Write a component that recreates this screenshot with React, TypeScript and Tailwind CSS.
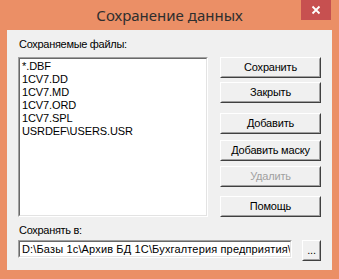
import React from "react";

const FILES = ["*.DBF", "1CV7.DD", "1CV7.MD", "1CV7.ORD", "1CV7.SPL", "USRDEF\\USERS.USR"];

const ui = { fontFamily: '"Liberation Sans", Arial, sans-serif' };

function Btn({ label, disabled, className = "" }: { label: string; disabled?: boolean; className?: string }) {
  return (
    <div className={`border border-t-white border-l-white border-b-[#404040] border-r-[#404040] ${className}`}>
      <div
        className={`flex h-[19px] items-center justify-center border border-t-[#f0f0f0] border-l-[#f0f0f0] border-b-[#a0a0a0] border-r-[#a0a0a0] bg-[#f0f0f0] text-[11px] tracking-[-0.2px] ${
          disabled ? "text-[#a0a0a0]" : "text-black"
        }`}
      >
        {label}
      </div>
    </div>
  );
}

function Sunken({ children, className = "" }: { children: React.ReactNode; className?: string }) {
  return (
    <div className={`border border-t-[#a0a0a0] border-l-[#a0a0a0] border-b-white border-r-white ${className}`}>
      <div className="h-full w-full overflow-hidden border border-t-[#696969] border-l-[#696969] border-b-[#e3e3e3] border-r-[#e3e3e3] bg-white">
        {children}
      </div>
    </div>
  );
}

export default function App() {
  return (
    <div className="flex h-[279px] w-[339px] flex-col bg-[#eb8f66]" style={ui}>
      {/* title bar */}
      <div className="relative flex h-[30px] shrink-0 items-center justify-center">
        <span className="text-[15px] text-[#2e2e2e]" style={{ fontFamily: '"Noto Sans", "Open Sans", sans-serif' }}>
          Сохранение данных
        </span>
        <div className="absolute right-[8px] top-0 flex h-[20px] w-[30px] items-center justify-center bg-[#c75050]">
          <svg width="10" height="10" viewBox="0 0 10 10">
            <path d="M1.5 1.5 L8.5 8.5 M8.5 1.5 L1.5 8.5" stroke="white" strokeWidth="1.8" />
          </svg>
        </div>
      </div>

      {/* client area */}
      <div className="mx-[7px] mb-[9px] flex flex-1 flex-col bg-[#f0f0f0] pl-[11px] pr-[10px] pt-[7px]">
        <div className="h-[14px] pl-[1px] text-[11px] leading-[14px] tracking-[-0.3px] text-black">Сохраняемые файлы:</div>
        <div className="mt-[6px] flex gap-[12px]">
          <Sunken className="h-[160px] w-[190px]">
            <div className="pl-[2px] pt-[1px] text-[11px] leading-[13px] tracking-[-0.1px] text-black">
              {FILES.map((f) => (
                <div key={f}>{f}</div>
              ))}
            </div>
          </Sunken>
          <div className="flex w-[101px] flex-col">
            <Btn label="Сохранить" />
            <Btn label="Закрыть" className="mt-[4px]" />
            <Btn label="Добавить" className="mt-[10px]" />
            <Btn label="Добавить маску" className="mt-[6px]" />
            <Btn label="Удалить" disabled className="mt-[5px]" />
            <Btn label="Помощь" className="mt-[9px]" />
          </div>
        </div>
        <div className="mt-[6px] h-[14px] pl-[1px] text-[11px] leading-[14px] tracking-[-0.3px] text-black">Сохранять в:</div>
        <div className="mt-[3px] flex items-start gap-[10px]">
          <Sunken className="h-[18px] w-[274px]">
            <div className="whitespace-nowrap pl-[2px] text-[11px] leading-[14px] tracking-[0.15px] text-black">
              D:\Базы 1с\Архив БД 1С\Бухгалтерия предприятия\
            </div>
          </Sunken>
          <Btn label="..." className="w-[19px]" />
        </div>
      </div>
    </div>
  );
}
